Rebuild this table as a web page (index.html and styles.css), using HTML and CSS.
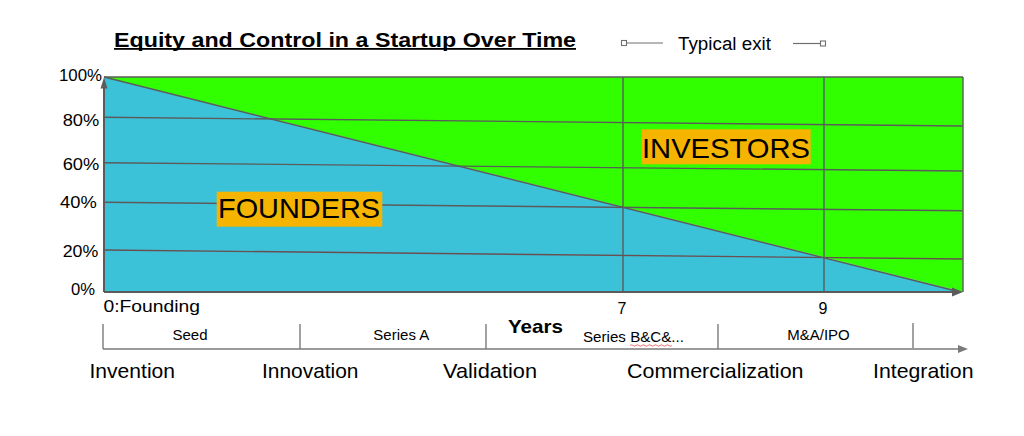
FILE: index.html
```html
<!DOCTYPE html>
<html lang="en">
<head>
<meta charset="utf-8">
<title>Equity and Control in a Startup Over Time</title>
<link rel="stylesheet" href="styles.css">
</head>
<body>
<div class="page">
<svg class="chart" width="1024" height="436" viewBox="0 0 1024 436" xmlns="http://www.w3.org/2000/svg">
  <!-- title -->
  <text class="title" x="114" y="47" textLength="462" lengthAdjust="spacingAndGlyphs">Equity and Control in a Startup Over Time</text>
  <rect class="ink" x="114" y="48" width="462" height="1.8"/>

  <!-- legend -->
  <rect class="lg-box" x="621.5" y="40.5" width="5" height="5"/>
  <line class="lg-line" x1="626.5" y1="43" x2="663" y2="43"/>
  <text class="legend" x="678" y="49.5" textLength="93" lengthAdjust="spacingAndGlyphs">Typical exit</text>
  <line class="lg-line" x1="793" y1="43.5" x2="820.5" y2="43.5"/>
  <rect class="lg-box" x="820.5" y="41" width="5" height="5"/>

  <!-- areas -->
  <polygon class="area-investors" points="104,77 963,77 963,292"/>
  <polygon class="area-founders" points="104,77 963,292 104,292"/>

  <!-- grid -->
  <line class="grid" x1="104" y1="117.3" x2="963" y2="126"/>
  <line class="grid" x1="104" y1="162.7" x2="963" y2="171"/>
  <line class="grid" x1="104" y1="202.3" x2="963" y2="210.7"/>
  <line class="grid grid-red" x1="104" y1="250" x2="963" y2="259"/>
  <line class="grid" x1="623" y1="77" x2="623" y2="292"/>
  <line class="grid" x1="824" y1="77" x2="824" y2="292"/>
  <line class="grid" x1="104" y1="77" x2="963" y2="77"/>
  <line class="grid" x1="963" y1="77" x2="963" y2="292"/>
  <line class="grid" x1="104" y1="77" x2="956" y2="291"/>

  <!-- axes -->
  <line class="axis" x1="104" y1="292" x2="104" y2="86"/>
  <polygon class="arrow" points="100.5,88.5 104,77.5 107.5,88.5"/>
  <line class="axis" x1="104" y1="292" x2="953" y2="292"/>
  <polygon class="arrow" points="952,287.5 963,292 952,296.5"/>

  <!-- big labels -->
  <rect class="label-bg" x="216.7" y="191.7" width="165.6" height="35"/>
  <text class="label" x="218" y="218.3" textLength="162" lengthAdjust="spacingAndGlyphs">FOUNDERS</text>
  <rect class="label-bg" x="641.7" y="129.3" width="169" height="35"/>
  <text class="label" x="642" y="157.7" textLength="168" lengthAdjust="spacingAndGlyphs">INVESTORS</text>

  <!-- y labels -->
  <text class="tick" x="59" y="80.7" textLength="43" lengthAdjust="spacingAndGlyphs">100%</text>
  <text class="tick" x="62.7" y="126" textLength="36.6" lengthAdjust="spacingAndGlyphs">80%</text>
  <text class="tick" x="62.7" y="170" textLength="36.6" lengthAdjust="spacingAndGlyphs">60%</text>
  <text class="tick" x="60" y="208.3" textLength="36.7" lengthAdjust="spacingAndGlyphs">40%</text>
  <text class="tick" x="62.7" y="256.7" textLength="35.6" lengthAdjust="spacingAndGlyphs">20%</text>
  <text class="tick" x="71" y="295" textLength="24" lengthAdjust="spacingAndGlyphs">0%</text>

  <!-- x labels -->
  <text class="tick" x="103.5" y="312.3" textLength="96.5" lengthAdjust="spacingAndGlyphs">0:Founding</text>
  <text class="tick mid" x="622" y="314.3">7</text>
  <text class="tick mid" x="823" y="314.3">9</text>

  <!-- timeline -->
  <line class="tl" x1="103" y1="349" x2="960" y2="349"/>
  <polygon class="arrow tl-arrow" points="958,345 968,349 958,353"/>
  <line class="tl" x1="103" y1="324" x2="103" y2="349"/>
  <line class="tl" x1="300" y1="324" x2="300" y2="349"/>
  <line class="tl" x1="486" y1="324" x2="486" y2="349"/>
  <line class="tl" x1="718" y1="324" x2="718" y2="349"/>
  <line class="tl" x1="913" y1="323" x2="913" y2="348"/>

  <text class="stage mid" x="190" y="340">Seed</text>
  <text class="stage mid" x="401.3" y="340">Series A</text>
  <text class="years" x="508" y="333.3" textLength="55" lengthAdjust="spacingAndGlyphs">Years</text>
  <text class="stage" x="583" y="341.7" textLength="101" lengthAdjust="spacingAndGlyphs">Series B&amp;C&amp;...</text>
  <path class="squiggle" d="M630 345.5 q1.5 -1.4 3 0 t3 0 t3 0 t3 0 t3 0 t3 0 t3 0 t3 0 t3 0 t3 0 t3 0 t3 0 t3 0 t3 0"/>
  <text class="stage mid" x="818.5" y="340">M&amp;A/IPO</text>

  <text class="phase" x="89.5" y="378.3" textLength="85.5" lengthAdjust="spacingAndGlyphs">Invention</text>
  <text class="phase" x="262" y="378.3" textLength="96.5" lengthAdjust="spacingAndGlyphs">Innovation</text>
  <text class="phase" x="443" y="378.3" textLength="94" lengthAdjust="spacingAndGlyphs">Validation</text>
  <text class="phase" x="627" y="378.3" textLength="176.5" lengthAdjust="spacingAndGlyphs">Commercialization</text>
  <text class="phase" x="873" y="378.3" textLength="100.5" lengthAdjust="spacingAndGlyphs">Integration</text>
</svg>
</div>
</body>
</html>
```

FILE: styles.css
```css
html, body {
  margin: 0;
  padding: 0;
  background: #ffffff;
}

.page {
  width: 1024px;
  height: 436px;
  overflow: hidden;
}

.chart {
  display: block;
  font-family: "Liberation Sans", Arial, Helvetica, sans-serif;
}

.chart text {
  fill: #000000;
}

.title {
  font-size: 20.5px;
  font-weight: 700;
}

.ink {
  fill: #000000;
}

.legend {
  font-size: 18px;
}

.lg-box {
  fill: #ffffff;
  stroke: #6f6f6f;
  stroke-width: 1.1;
}

.lg-line {
  stroke: #6f6f6f;
  stroke-width: 1.2;
}

.area-investors {
  fill: #31ff00;
}

.area-founders {
  fill: #3cc2d8;
}

.grid {
  stroke: #5b5b5b;
  stroke-width: 1.4;
}

.grid-red {
  stroke: #6a4f50;
}

.axis {
  stroke: #5b5b5b;
  stroke-width: 2;
}

.arrow {
  fill: #5b5b5b;
}

.label-bg {
  fill: #f5b400;
}

.label {
  font-size: 28px;
}

.tick {
  font-size: 16px;
}

.mid {
  text-anchor: middle;
}

.tl {
  stroke: #7a7a7a;
  stroke-width: 1.4;
}

.tl-arrow {
  fill: #7a7a7a;
}

.stage {
  font-size: 15px;
}

.years {
  font-size: 19px;
  font-weight: 700;
}

.squiggle {
  fill: none;
  stroke: #e8605a;
  stroke-width: 0.9;
}

.phase {
  font-size: 21px;
}
```
